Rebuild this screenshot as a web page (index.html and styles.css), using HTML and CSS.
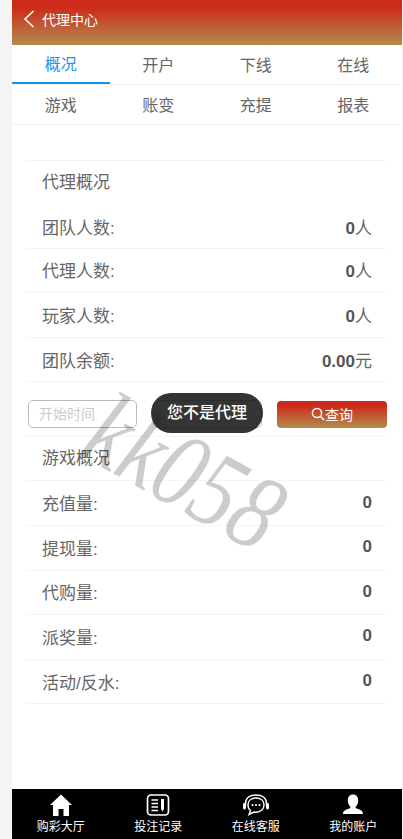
FILE: index.html
```html
<!DOCTYPE html>
<html lang="zh-CN">
<head>
    <meta charset="UTF-8">
    <title>代理中心</title>
    <link rel="stylesheet" href="styles.css">
</head>
<body>
    <div class="agent-page">
        <!-- 顶部标题 -->
        <header class="top-bar">
            <svg class="back-icon" width="12" height="18" viewBox="0 0 12 18"><path d="M10.5 1 L2 9 L10.5 17" fill="none" stroke="#fff" stroke-width="1.6"/></svg>
            <span class="top-title">代理中心</span>
        </header>

        <!-- 标签 -->
        <nav class="tabs">
            <a class="tab active">概况</a>
            <a class="tab">开户</a>
            <a class="tab">下线</a>
            <a class="tab">在线</a>
        </nav>
        <nav class="tabs">
            <a class="tab">游戏</a>
            <a class="tab">账变</a>
            <a class="tab">充提</a>
            <a class="tab">报表</a>
        </nav>

        <main class="content">
            <div class="row-title first">代理概况</div>
            <div class="row"><span>团队人数:</span><span><b>0</b>人</span></div>
            <div class="row"><span>代理人数:</span><span><b>0</b>人</span></div>
            <div class="row"><span>玩家人数:</span><span><b>0</b>人</span></div>
            <div class="row"><span>团队余额:</span><span><b>0.00</b>元</span></div>

            <!-- 查询 -->
            <div class="search-bar">
                <input class="date-input" placeholder="开始时间">
                <input class="date-input">
                <button class="search-btn">
                    <svg width="14" height="14" viewBox="0 0 14 14"><circle cx="6" cy="6" r="4.6" fill="none" stroke="#fff" stroke-width="1.5"/><path d="M9.5 9.5 L13 13" stroke="#fff" stroke-width="1.6"/></svg>查询
                </button>
            </div>

            <div class="row-title second">游戏概况</div>
            <div class="row"><span>充值量:</span><b>0</b></div>
            <div class="row"><span>提现量:</span><b>0</b></div>
            <div class="row"><span>代购量:</span><b>0</b></div>
            <div class="row"><span>派奖量:</span><b>0</b></div>
            <div class="row"><span>活动/反水:</span><b>0</b></div>
        </main>

        <!-- 底部导航 -->
        <footer class="bottom-nav">
            <a class="nav-item">
                <svg width="24" height="22" viewBox="0 0 24 22"><path d="M12 0.5 L23 11 H20 V22 H14.5 V15 H9.5 V22 H4 V11 H1 Z" fill="#fff"/></svg>
                <span>购彩大厅</span>
            </a>
            <a class="nav-item">
                <svg width="24" height="22" viewBox="0 0 24 22"><rect x="1.5" y="1" width="21" height="20" rx="3.5" fill="none" stroke="#fff" stroke-width="1.7"/><path d="M5.5 6 H12 M5.5 9.5 H12 M5.5 13 H12 M5.5 16.5 H12" stroke="#fff" stroke-width="1.4"/><path d="M15 5 H18 V15 L16.5 17.5 L15 15 Z" fill="#fff"/></svg>
                <span>投注记录</span>
            </a>
            <a class="nav-item">
                <svg width="28" height="22" viewBox="0 0 28 22"><path d="M3.5 12 V9.5 C3.5 4 8 1 14 1 C20 1 24.5 4 24.5 9.5 V12" fill="none" stroke="#fff" stroke-width="1.5"/><path d="M14 4 C9 4 6 7 6 11 C6 13.5 7 15.5 8.5 16.5 L7 20.5 L12 18 C12.7 18.1 13.3 18.2 14 18.2 C19 18.2 22 15 22 11 C22 7 19 4 14 4 Z" fill="none" stroke="#fff" stroke-width="1.4"/><circle cx="10.5" cy="11" r="1.1" fill="#fff"/><circle cx="14" cy="11" r="1.1" fill="#fff"/><circle cx="17.5" cy="11" r="1.1" fill="#fff"/><rect x="1" y="9" width="3" height="6.5" rx="1.4" fill="#fff"/><rect x="24" y="9" width="3" height="6.5" rx="1.4" fill="#fff"/></svg>
                <span>在线客服</span>
            </a>
            <a class="nav-item">
                <svg width="22" height="22" viewBox="0 0 22 22"><path d="M11 0.5 C14.5 0.5 16.2 3 16.2 6.5 C16.2 9.5 15 11.5 13.6 12.7 V14 C15.5 15.2 21 15.8 21 19.5 V20 H1 V19.5 C1 15.8 6.5 15.2 8.4 14 V12.7 C7 11.5 5.8 9.5 5.8 6.5 C5.8 3 7.5 0.5 11 0.5 Z" fill="#fff"/></svg>
                <span>我的账户</span>
            </a>
        </footer>

        <!-- 水印和提示 -->
        <div class="watermark">kk058</div>
        <div class="toast">您不是代理</div>
    </div>
</body>
</html>
```

FILE: styles.css
```css
* {
    margin: 0;
    padding: 0;
    box-sizing: border-box;
}

html, body {
    height: 100%;
    overflow: hidden;
    background-color: #f3f5f5;
    font-family: "Liberation Sans", "Noto Sans CJK SC", sans-serif;
    color: #666;
}

.agent-page {
    position: relative;
    display: flex;
    flex-direction: column;
    height: 839px;
    margin: 0 1px 0 12px;
    background-color: #fff;
    overflow: hidden;
}

.top-bar {
    display: flex;
    align-items: center;
    height: 45px;
    padding: 0 0 8px 11px;
    background: linear-gradient(#cc2a1a 15%, #b38b4d 100%);
    color: #fff;
}

.back-icon {
    margin-right: 7px;
}

.top-title {
    font-size: 14px;
}

.tabs {
    display: flex;
    height: 40px;
    border-bottom: 1px solid #f0f0f0;
}

.tab {
    flex: 1;
    display: flex;
    align-items: center;
    justify-content: center;
    padding-bottom: 2px;
    font-size: 16px;
    color: #666;
}

.tab.active {
    color: #1a96e8;
    border-bottom: 2px solid #1496e8;
}

.content {
    flex: 1;
    padding: 35px 15px 0;
    font-size: 17px;
}

.row-title {
    display: flex;
    align-items: center;
    padding: 0 15px 4px;
}

.row-title.first {
    height: 44px;
    border-top: 1px solid #f5f5f5;
}

.row-title.second {
    height: 44px;
    border-bottom: 1px solid #f5f5f5;
}

.row {
    display: flex;
    align-items: center;
    justify-content: space-between;
    height: 44.6px;
    padding: 0 15px 1px;
    border-bottom: 1px solid #f5f5f5;
}

.row-title.first + .row {
    padding-top: 2px;
}

.row b {
    font-weight: bold;
    color: #555;
}

.search-bar {
    display: flex;
    align-items: center;
    justify-content: space-between;
    height: 55px;
    padding: 10px 0 0 1px;
    border-bottom: 1px solid #f5f5f5;
}

.date-input {
    width: 109px;
    height: 28px;
    padding-left: 10px;
    border: 1px solid #bbb;
    border-radius: 5px;
    font-size: 14px;
    font-family: inherit;
    outline: none;
}

.date-input::placeholder {
    color: #ccc;
}

.search-btn {
    display: flex;
    align-items: center;
    justify-content: center;
    width: 110px;
    height: 27px;
    border: 0;
    border-radius: 4px;
    background: linear-gradient(#cc2a1a 15%, #b38b4d 100%);
    color: #fff;
    font-size: 14px;
    font-family: inherit;
}

.bottom-nav {
    display: flex;
    height: 50px;
    background-color: #000;
}

.nav-item {
    flex: 1;
    display: flex;
    flex-direction: column;
    align-items: center;
    padding-top: 5px;
    color: #fff;
    font-size: 12px;
    line-height: 16px;
}

.nav-item svg {
    display: block;
    margin-bottom: 3px;
}

.watermark {
    position: absolute;
    left: 109px;
    top: 375px;
    font-family: "Liberation Serif", serif;
    font-style: italic;
    font-size: 108px;
    line-height: 1;
    color: rgba(0, 0, 0, 0.2);
    transform: rotate(29deg) scaleX(0.8);
    transform-origin: left top;
    pointer-events: none;
}

.toast {
    position: absolute;
    left: 139px;
    top: 393px;
    width: 112px;
    height: 40px;
    border-radius: 20px;
    background-color: rgba(30, 30, 30, 0.9);
    color: #fff;
    font-size: 16px;
    font-weight: 500;
    line-height: 39px;
    text-align: center;
}
```
